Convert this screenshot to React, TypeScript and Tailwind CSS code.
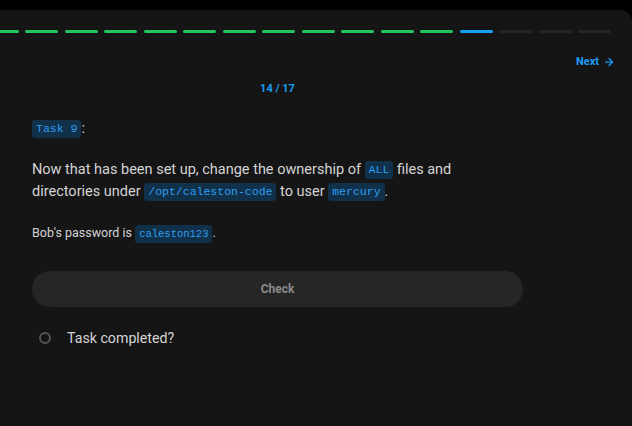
import React from 'react';
import { ArrowRight } from 'lucide-react';

const segments = Array.from({ length: 17 }, (_, i) => i);

function Code({ children, small }: { children: React.ReactNode; small?: boolean }) {
  return (
    <code
      className={`inline-block rounded-[3px] bg-[#11304a] px-[4px] py-[2px] align-middle font-['Liberation_Mono',monospace] leading-[14px] text-[#2f9ff0] ${
        small ? 'text-[10.5px]' : 'text-[11.5px]'
      }`}
    >
      {children}
    </code>
  );
}

export default function App() {
  return (
    <div className="h-[426px] w-[632px] overflow-hidden bg-black font-['Roboto',sans-serif]">
      <div className="h-[10px]" />
      <div className="h-[416px] rounded-tr-xl bg-[#151515] pt-[20px]">
        <div className="ml-[-54px] flex gap-[6.5px]">
          {segments.map((i) => (
            <div
              key={i}
              className={`h-[3px] w-[33px] shrink-0 rounded-full ${
                i < 13 ? 'bg-[#22c55e]' : i === 13 ? 'bg-[#18a2f5]' : 'bg-[#262626]'
              }`}
            />
          ))}
        </div>

        <div className="mt-[22px] flex justify-end pr-[17px]">
          <button className="flex items-center gap-[4px] text-[11px] font-bold leading-[14px] text-[#1a9ff5]">
            Next
            <ArrowRight className="h-[12px] w-[12px]" strokeWidth={2.5} />
          </button>
        </div>

        <div className="ml-[32px] w-[491px]">
          <div className="mt-[13px] text-center text-[11px] font-bold leading-[14px] text-[#1a9ff5]">14 / 17</div>

          <div className="mt-[22px] text-[15px] leading-[20px] text-[#d4d4d4]">
            <Code>Task 9</Code>:
          </div>

          <p className="mt-[21px] text-[14.5px] leading-[22px] text-[#d4d4d4]">
            Now that has been set up, change the ownership of <Code>ALL</Code> files and directories under{' '}
            <Code>/opt/caleston-code</Code> to user <Code>mercury</Code>.
          </p>

          <p className="mt-[21px] text-[12.5px] leading-[18px] text-[#d4d4d4]">
            Bob's password is <Code small>caleston123</Code>.
          </p>

          <button className="mt-[28px] flex h-[36px] w-full items-center justify-center rounded-full bg-[#262626] text-[12px] font-bold text-[#8a8a8a]">
            Check
          </button>

          <div className="mt-[21px] flex items-center">
            <span className="ml-[7px] h-[12px] w-[12px] rounded-full border-2 border-[#555555]" />
            <span className="ml-[16px] text-[14.2px] leading-[20px] text-[#d4d4d4]">Task completed?</span>
          </div>
        </div>
      </div>
    </div>
  );
}
